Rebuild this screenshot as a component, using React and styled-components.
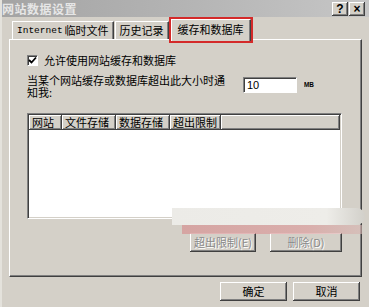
import React from 'react';
import styled, { createGlobalStyle, css } from 'styled-components';

const GlobalStyle = createGlobalStyle`
  html, body {
    margin: 0;
    padding: 0;
    background: #d4d0c8;
  }
  * {
    box-sizing: border-box;
  }
`;

const raised = css`
  box-shadow: inset -1px -1px 0 #404040, inset 1px 1px 0 #ffffff, inset -2px -2px 0 #808080;
`;

const columns = [
  { label: '网站', width: 33 },
  { label: '文件存储', width: 54 },
  { label: '数据存储', width: 54 },
  { label: '超出限制', width: 51 },
];

const App = () => {
  return (
    <>
      <GlobalStyle />
      <Window>
        <TitleBar>
          <Title>网站数据设置</Title>
          <Controls>
            <CtrlButton>?</CtrlButton>
            <CtrlButton>×</CtrlButton>
          </Controls>
        </TitleBar>

        <Body>
          <TabStrip>
            <Tab>
              <Latin>Internet</Latin> 临时文件
            </Tab>
            <Tab>历史记录</Tab>
            <Tab $active>缓存和数据库</Tab>
          </TabStrip>

          <Panel>
            <CheckRow>
              <CheckBox>
                <svg width='9' height='9' viewBox='0 0 9 9'>
                  <path d='M1 4 L3.5 6.5 L8 1.5' stroke='#000' strokeWidth='1.8' fill='none' />
                </svg>
              </CheckBox>
              <span>允许使用网站缓存和数据库</span>
            </CheckRow>

            <SizeRow>
              <SizeLabel>
                <div>当某个网站缓存或数据库超出此大小时通</div>
                <div>知我:</div>
              </SizeLabel>
              <SizeInput>10</SizeInput>
              <Unit>MB</Unit>
            </SizeRow>

            <ListView>
              <ListHeader>
                {columns.map((c) => (
                  <HeaderCell key={c.label} style={{ width: c.width }}>
                    {c.label}
                  </HeaderCell>
                ))}
                <HeaderFill />
              </ListHeader>
            </ListView>

            <ActionRow>
              <Button $width={66} $disabled>
                超出限制(E)
              </Button>
              <Button $width={72} $disabled>
                删除(D)
              </Button>
            </ActionRow>
          </Panel>

          <Footer>
            <Button $width={67}>确定</Button>
            <Button $width={67}>取消</Button>
          </Footer>
        </Body>

        <Smear />
        <SmearPink />
      </Window>
    </>
  );
};

const Window = styled.div`
  position: relative;
  width: 369px;
  height: 307px;
  background: #d4d0c8;
  border-left: 2px solid #e4e2dc;
  overflow: hidden;
  font-family: 'Noto Sans CJK SC', 'Liberation Sans', sans-serif;
  font-size: 11px;
  color: #000;
`;

const TitleBar = styled.div`
  display: flex;
  align-items: center;
  justify-content: space-between;
  height: 17px;
  padding: 0 4px 0 0;
  background: linear-gradient(90deg, #a4a4a4 0%, #b4b4b4 50%, #c6c6c6 100%);
`;

const Title = styled.div`
  color: #e6e6e6;
  font-size: 12px;
  font-weight: bold;
  line-height: 17px;
  letter-spacing: 0.5px;
`;

const Controls = styled.div`
  display: flex;
  gap: 1px;
  margin-top: 1px;
`;

const CtrlButton = styled.div`
  width: 16px;
  height: 14px;
  background: #d4d0c8;
  ${raised};
  display: flex;
  align-items: center;
  justify-content: center;
  font-family: 'Liberation Sans', sans-serif;
  font-weight: bold;
  font-size: 12px;
  line-height: 1;
`;

const Body = styled.div`
  display: flex;
  flex-direction: column;
  padding: 0 7px 0 7px;
`;

const TabStrip = styled.div`
  display: flex;
  align-items: flex-end;
  height: 22px;
  padding-left: 3px;
  position: relative;
  z-index: 1;
`;

const Tab = styled.div`
  height: 18px;
  padding: 0 4px;
  display: flex;
  align-items: center;
  line-height: 1;
  white-space: nowrap;
  border-top: 1px solid #ffffff;
  border-left: 1px solid #ffffff;
  border-right: 1px solid #404040;
  box-shadow: inset -1px 0 0 #808080;
  background: #d4d0c8;
  margin-right: 1px;

  ${({ $active }) =>
    $active &&
    css`
      height: 22px;
      margin: 0 0 -2px 1px;
      padding: 0 6px 3px 6px;
      outline: 2px solid #d42a2a;
      outline-offset: 0;
    `}
`;

const Latin = styled.span`
  font-family: 'Liberation Mono', monospace;
  font-size: 9.5px;
  margin-right: 2px;
`;

const Panel = styled.div`
  height: 238px;
  display: flex;
  flex-direction: column;
  padding: 14px 19px 0 17px;
  border-top: 1px solid #ffffff;
  border-left: 1px solid #ffffff;
  border-right: 1px solid #404040;
  border-bottom: 1px solid #404040;
  box-shadow: inset -1px -1px 0 #808080;
`;

const CheckRow = styled.div`
  display: flex;
  align-items: center;
  gap: 6px;
  height: 13px;
  line-height: 1;
`;

const CheckBox = styled.div`
  width: 11px;
  height: 11px;
  background: #fff;
  border-top: 1px solid #808080;
  border-left: 1px solid #808080;
  border-right: 1px solid #ffffff;
  border-bottom: 1px solid #ffffff;
  box-shadow: inset 1px 1px 0 #404040;
  display: flex;
  align-items: center;
  justify-content: center;
`;

const SizeRow = styled.div`
  display: flex;
  align-items: flex-start;
  margin-top: 7px;
  height: 26px;
`;

const SizeLabel = styled.div`
  width: 216px;
  display: flex;
  flex-direction: column;
  gap: 1px;
  line-height: 11px;
  padding-top: 1px;
`;

const SizeInput = styled.div`
  width: 54px;
  height: 16px;
  margin-top: 3px;
  background: #fff;
  border-top: 1px solid #808080;
  border-left: 1px solid #808080;
  border-right: 1px solid #ffffff;
  border-bottom: 1px solid #ffffff;
  box-shadow: inset 1px 1px 0 #404040;
  padding: 1px 3px;
  font-family: 'Liberation Sans', sans-serif;
  font-size: 11px;
  line-height: 13px;
`;

const Unit = styled.div`
  margin: 6px 0 0 7px;
  font-family: 'Liberation Sans', sans-serif;
  font-size: 8px;
  font-weight: bold;
  transform: scaleX(0.8);
  transform-origin: left;
`;

const ListView = styled.div`
  margin-top: 13px;
  height: 106px;
  background: #ffffff;
  border-top: 1px solid #808080;
  border-left: 1px solid #808080;
  border-right: 1px solid #ffffff;
  border-bottom: 1px solid #ffffff;
  box-shadow: inset 1px 1px 0 #404040, inset -1px -1px 0 #d4d0c8;
  padding: 1px 1px 0 1px;
`;

const ListHeader = styled.div`
  display: flex;
  height: 15px;
`;

const HeaderCell = styled.div`
  flex: none;
  height: 15px;
  padding: 0 3px;
  background: #d4d0c8;
  ${raised};
  line-height: 15px;
  white-space: nowrap;
`;

const HeaderFill = styled.div`
  flex: 1;
  background: #d4d0c8;
  ${raised};
`;

const ActionRow = styled.div`
  display: flex;
  justify-content: flex-end;
  gap: 14px;
  margin-top: 14px;
`;

const Button = styled.div`
  width: ${({ $width }) => $width}px;
  height: 19px;
  background: #d4d0c8;
  ${raised};
  display: flex;
  align-items: center;
  justify-content: center;
  line-height: 1;
  white-space: nowrap;

  ${({ $disabled }) =>
    $disabled &&
    css`
      color: #8a8a8a;
      text-shadow: 1px 1px 0 #ffffff;
    `}
`;

const Footer = styled.div`
  display: flex;
  justify-content: flex-end;
  gap: 6px;
  margin-top: 5px;
  padding-right: 2px;
`;

const Smear = styled.div`
  position: absolute;
  left: 170px;
  top: 208px;
  width: 193px;
  height: 17px;
  border-radius: 0 9px 9px 0;
  background: linear-gradient(90deg, #ecebe7 0%, #eeede9 80%, #d2d0ca 100%);
`;

const SmearPink = styled.div`
  position: absolute;
  left: 180px;
  top: 225px;
  width: 180px;
  height: 9px;
  background: linear-gradient(90deg, rgba(214, 150, 150, 0.75), rgba(220, 160, 160, 0.7) 70%, rgba(214, 180, 176, 0.6));
`;

export default App;
